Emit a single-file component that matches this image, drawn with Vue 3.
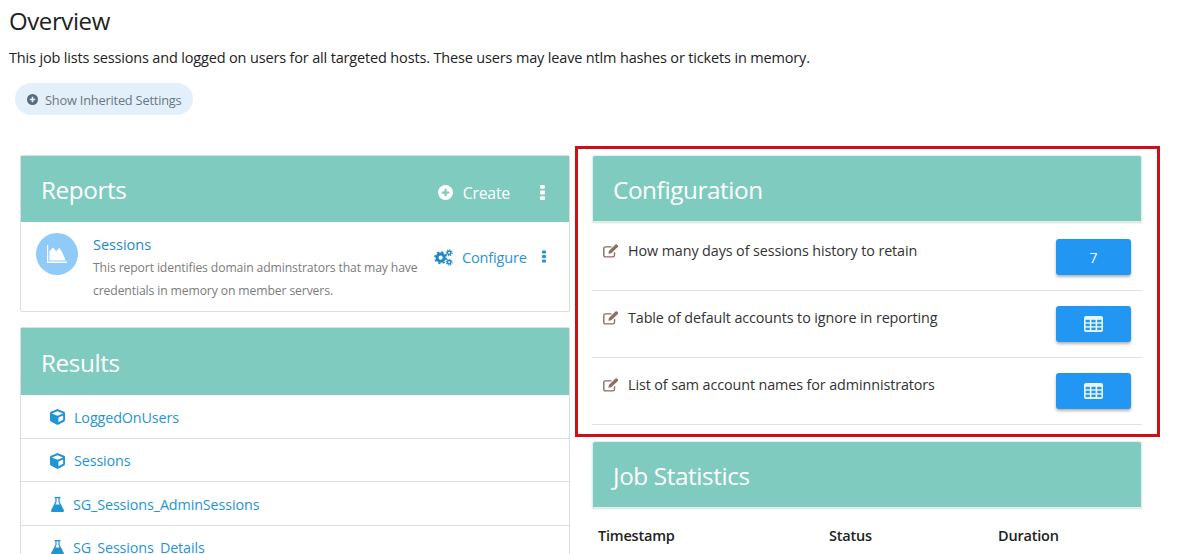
<script setup>
const results = [
  { name: 'LoggedOnUsers', kind: 'cube' },
  { name: 'Sessions', kind: 'cube' },
  { name: 'SG_Sessions_AdminSessions', kind: 'flask' },
  { name: 'SG_Sessions_Details', kind: 'flask' }
]
const configs = [
  { label: 'How many days of sessions history to retain', value: '7' },
  { label: 'Table of default accounts to ignore in reporting', value: '' },
  { label: 'List of sam account names for adminnistrators', value: '' }
]
</script>

<template>
  <div class="page">
    <h1 class="title">Overview</h1>
    <p class="desc">This job lists sessions and logged on users for all targeted hosts. These users may leave ntlm hashes or tickets in memory.</p>
    <button class="pill">
      <svg class="pill-icon" viewBox="0 0 24 24"><circle cx="12" cy="12" r="12" fill="currentColor"/><path d="M12 6v12M6 12h12" stroke="#e3f0fb" stroke-width="3.6"/></svg>
      <span class="pill-text">Show Inherited Settings</span>
    </button>

    <div class="columns">
      <div class="col">
        <section class="panel bordered reports">
          <header class="head">
            <h2>Reports</h2>
            <div class="head-actions">
              <svg class="create-icon" viewBox="0 0 24 24"><circle cx="12" cy="12" r="12" fill="#fff"/><path d="M12 6v12M6 12h12" stroke="#80cbc0" stroke-width="3.6"/></svg>
              <span class="create">Create</span>
              <svg class="dots" viewBox="0 0 6 18"><g fill="#fff"><rect width="6" height="4.6" rx="1.2"/><rect y="6.7" width="6" height="4.6" rx="1.2"/><rect y="13.4" width="6" height="4.6" rx="1.2"/></g></svg>
            </div>
          </header>
          <div class="report">
            <div class="avatar">
              <svg viewBox="0 0 20 18" class="chart"><path d="M0 0h1.2v16.6H20V18H0z" fill="#fff"/><path d="M2.4 15.4V6.2L6 2.6l3.2 3.6L12.4 2.8l3 5 3.4 7.6z" fill="#fff"/></svg>
            </div>
            <div class="report-body">
              <a class="report-name">Sessions</a>
              <p class="report-text">This report identifies domain adminstrators that may have credentials in memory on member servers.</p>
            </div>
            <div class="report-actions">
              <svg class="cogs" viewBox="0 0 20 18">
                <g fill="none" stroke="#1f87c9">
                  <circle cx="7" cy="9.2" r="3.8" stroke-width="3.2"/>
                  <circle cx="7" cy="9.2" r="6" stroke-width="1.8" stroke-dasharray="2.4 2.3"/>
                  <circle cx="16" cy="4" r="1.8" stroke-width="1.5"/>
                  <circle cx="16" cy="4" r="3.1" stroke-width="1.1" stroke-dasharray="1.3 1.1"/>
                  <circle cx="16" cy="14" r="1.8" stroke-width="1.5"/>
                  <circle cx="16" cy="14" r="3.1" stroke-width="1.1" stroke-dasharray="1.3 1.1"/>
                </g>
              </svg>
              <a class="configure">Configure</a>
              <svg class="dots small" viewBox="0 0 6 18"><g fill="#2196d3"><rect width="6" height="4.6" rx="1.2"/><rect y="6.7" width="6" height="4.6" rx="1.2"/><rect y="13.4" width="6" height="4.6" rx="1.2"/></g></svg>
            </div>
          </div>
        </section>

        <section class="panel bordered results">
          <header class="head"><h2>Results</h2></header>
          <div v-for="r in results" :key="r.name" class="result">
            <svg v-if="r.kind === 'cube'" class="res-icon cube" viewBox="0 0 512 512" preserveAspectRatio="none"><path fill="#1f95d6" d="M239.1 6.3l-208 78c-18.7 7-31.1 25-31.1 45v225.1c0 18.2 10.3 34.8 26.5 42.9l208 104c13.5 6.8 29.4 6.8 42.9 0l208-104c16.3-8.1 26.5-24.8 26.5-42.9V129.3c0-20-12.4-37.9-31.1-44.9l-208-78C262 2.2 250 2.2 239.1 6.3zM256 68.4l192 72v1.1l-192 78-192-78v-1.1l192-72zm32 356V275.5l160-65v133.9l-160 80z"/></svg>
            <svg v-else class="res-icon flask" viewBox="0 0 14 16"><path fill="#1f95d6" d="M3.8 0h6.400v1.200H9.300v3.900L13.800 14c.4 1-.2 2-1.300 2H1.500C.4 16-.2 15 .2 14L4.700 5.100V1.200h-.9zM6 1.200v4.200L4.700 8h4.600L8 5.400V1.200z"/></svg>
            <a class="res-name">{{ r.name }}</a>
          </div>
        </section>
      </div>

      <div class="col">
        <section class="panel config">
          <header class="head flat"><h2>Configuration</h2></header>
          <div v-for="c in configs" :key="c.label" class="cfg-row">
            <svg class="edit" viewBox="0 0 16 14">
              <path fill="none" stroke="#8d6e63" stroke-width="1.4" d="M11.500 8.200v3c0 1-.7 1.700-1.700 1.700H2.500c-1 0-1.700-.7-1.700-1.700V4.600c0-1 .7-1.700 1.700-1.700h6"/>
              <path fill="#8d6e63" d="M5.400 9.700l.5-2.700L12.500.5c.4-.4 1-.4 1.400 0l1 1c.4.400.4 1 0 1.400L8.200 9.300z"/>
            </svg>
            <span class="cfg-label">{{ c.label }}</span>
            <button class="cfg-btn">
              <template v-if="c.value">{{ c.value }}</template>
              <svg v-else class="grid-icon" viewBox="0 0 19 16">
                <rect width="19" height="16" rx="2" fill="#eaf5fe"/>
                <g fill="#2196f3">
                  <rect x="1.600" y="3.800" width="4.200" height="2.500"/><rect x="7.400" y="3.800" width="4.200" height="2.500"/><rect x="13.200" y="3.800" width="4.200" height="2.500"/>
                  <rect x="1.600" y="7.700" width="4.200" height="2.500"/><rect x="7.400" y="7.700" width="4.200" height="2.500"/><rect x="13.200" y="7.700" width="4.200" height="2.500"/>
                  <rect x="1.600" y="11.600" width="4.200" height="2.500"/><rect x="7.400" y="11.600" width="4.200" height="2.500"/><rect x="13.200" y="11.600" width="4.200" height="2.500"/>
                </g>
              </svg>
            </button>
          </div>
        </section>

        <section class="panel stats">
          <header class="head flat"><h2>Job Statistics</h2></header>
          <div class="stats-head">
            <span>Timestamp</span>
            <span>Status</span>
            <span>Duration</span>
          </div>
        </section>
      </div>
    </div>

    <div class="highlight"></div>
  </div>
</template>

<style>
html, body { margin: 0; background: #fff; overflow: hidden; }
</style>

<style scoped>
.page {
  position: relative;
  width: 1178px;
  height: 554px;
  overflow: hidden;
  background: #fff;
  font-family: "Open Sans", "Noto Sans", sans-serif;
  color: #222;
  box-sizing: border-box;
  padding: 5px 0 0 9px;
}
.title {
  margin: 0;
  font-size: 24px;
  line-height: 32px;
  font-weight: 400;
  letter-spacing: -.4px;
  color: #222;
}
.desc {
  margin: 9px 0 0;
  font-size: 14.500px;
  line-height: 24px;
  letter-spacing: -.16px;
  color: #222;
}
.pill {
  display: flex;
  align-items: center;
  gap: 7px;
  margin: 13px 0 0 6px;
  width: 178px;
  height: 32px;
  padding: 0 0 0 12px;
  border: 0;
  border-radius: 16px;
  background: #e3f0fb;
  color: #6a7780;
  font-family: inherit;
  font-size: 12.800px;
  letter-spacing: -.2px;
  white-space: nowrap;
}
.pill-text { position: relative; top: 1px; }
.pill-icon { width: 11px; height: 11px; color: #566c7d; flex: none; }
.columns {
  display: grid;
  grid-template-columns: 550px 550px;
  gap: 22px;
  margin: 40px 0 0 11px;
}
.col { display: flex; flex-direction: column; min-width: 0; }
.panel { box-sizing: border-box; background: #fff; }
.bordered { border: 1px solid #ddd; border-radius: 2px; }
.head {
  display: flex;
  align-items: center;
  justify-content: space-between;
  box-sizing: border-box;
  height: 66px;
  padding: 0 20px;
  background: #80cbc0;
  color: #fff;
}
.results .head { height: 67px; }
.head.flat {
  height: 67px;
  padding: 0 20px;
  border: 1px solid #e4eeec;
  border-radius: 3px 3px 0 0;
  box-shadow: 0 1px 2px rgba(0,0,0,.14);
}
.head h2 {
  margin: 0;
  font-size: 24.300px;
  line-height: 32px;
  font-weight: 400;
  letter-spacing: -.4px;
  position: relative;
  top: 1px;
}
.head-actions { display: flex; align-items: center; padding-top: 7px; }
.create-icon { width: 15px; height: 15px; margin-right: 10px; }
.create { font-size: 15.800px; letter-spacing: -.2px; margin-right: 30px; }
.dots { width: 5px; height: 15px; margin-right: 4px; }
.report {
  display: flex;
  height: 89px;
  box-sizing: border-box;
  padding: 11px 0 0 15px;
}
.avatar {
  flex: none;
  width: 42px;
  height: 42px;
  border-radius: 50%;
  background: #90caf9;
  display: flex;
  align-items: center;
  justify-content: center;
}
.chart { width: 20px; height: 18px; }
.report-body { width: 344px; margin-left: 15px; flex: none; }
.report-name {
  display: block;
  font-size: 14.500px;
  line-height: 24px;
  color: #1f87c9;
}
.report-text {
  margin: 0;
  font-size: 12.200px;
  line-height: 23px;
  color: #7c7c7c;
  letter-spacing: -.12px;
  position: relative;
  top: -1px;
}
.report-actions {
  display: flex;
  align-items: center;
  height: 30px;
  margin: 9px 0 0 -3px;
}
.cogs { width: 19px; height: 17px; margin-right: 9px; }
.configure { font-size: 14.500px; color: #1f95d6; letter-spacing: -.15px; margin-right: 15px; }
.dots.small { width: 4px; height: 13px; margin: -2px 0 0 0; }
.results { margin-top: 15px; height: 300px; }
.result {
  display: flex;
  align-items: center;
  box-sizing: border-box;
  height: 43.500px;
  padding: 2px 0 0 29px;
  border-bottom: 1px solid #ddd;
}
.res-icon { flex: none; }
.res-icon.cube { width: 15px; height: 16px; margin-right: 9px; }
.res-icon.flask { width: 13px; height: 15px; margin: 0 9px 0 1px; }
.res-name { font-size: 14.350px; color: #1f95d6; letter-spacing: -.12px; }
.config .head { margin-bottom: 2px; }
.cfg-row {
  display: flex;
  align-items: flex-start;
  box-sizing: border-box;
  height: 67px;
  border-bottom: 1px solid #e2e2e2;
  padding: 15px 11px 0 11px;
  position: relative;
}
.edit { width: 16px; height: 14px; margin: 5px 9px 0 0; flex: none; }
.cfg-label { font-size: 14.350px; line-height: 24px; color: #333; letter-spacing: -.1px; flex: 1; }
.cfg-btn {
  flex: none;
  width: 75px;
  height: 36px;
  border: 0;
  border-radius: 3px;
  background: #2196f3;
  color: #fff;
  font-family: inherit;
  font-size: 14px;
  display: flex;
  align-items: center;
  justify-content: center;
  box-shadow: 0 2px 3px rgba(0,0,0,.3);
  padding: 0;
}
.grid-icon { width: 19px; height: 16px; }
.stats { margin-top: 16px; }
.stats-head {
  display: grid;
  grid-template-columns: 231px 169px 1fr;
  padding: 16px 0 0 6px;
  font-size: 14.500px;
  line-height: 24px;
  font-weight: 600;
  letter-spacing: -.2px;
  color: #222;
}
.highlight {
  position: absolute;
  left: 575px;
  top: 146px;
  width: 585px;
  height: 291px;
  box-sizing: border-box;
  border: 3px solid #cc1016;
  pointer-events: none;
}
</style>
